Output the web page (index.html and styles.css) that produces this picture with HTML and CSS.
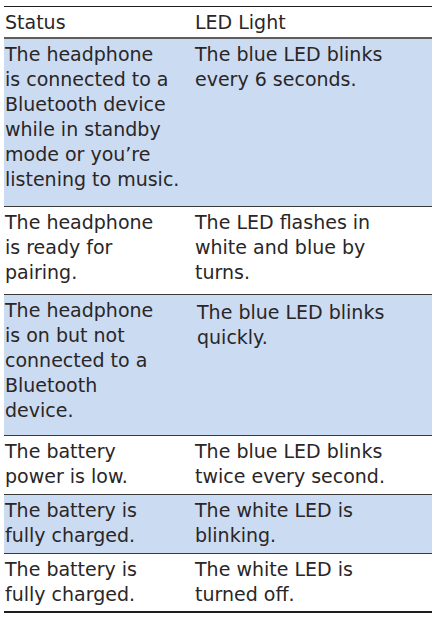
FILE: index.html
```html
<!DOCTYPE html>
<html>
<head>
<meta charset="utf-8">
<link rel="stylesheet" href="styles.css">
</head>
<body>
<div class="table">
  <div class="row head">
    <div class="cell c1">Status</div>
    <div class="cell c2">LED Light</div>
  </div>
  <div class="row blue h1">
    <div class="cell c1">The headphone<br>is connected to a<br>Bluetooth device<br>while in standby<br>mode or you’re<br>listening to music.</div>
    <div class="cell c2">The blue LED blinks<br>every 6 seconds.</div>
  </div>
  <div class="row h2">
    <div class="cell c1">The headphone<br>is ready for<br>pairing.</div>
    <div class="cell c2">The LED flashes in<br>white and blue by<br>turns.</div>
  </div>
  <div class="row blue h3">
    <div class="cell c1">The headphone<br>is on but not<br>connected to a<br>Bluetooth<br>device.</div>
    <div class="cell c2 shift">The blue LED blinks<br>quickly.</div>
  </div>
  <div class="row h4">
    <div class="cell c1">The battery<br>power is low.</div>
    <div class="cell c2">The blue LED blinks<br>twice every second.</div>
  </div>
  <div class="row blue h4">
    <div class="cell c1">The battery is<br>fully charged.</div>
    <div class="cell c2">The white LED is<br>blinking.</div>
  </div>
  <div class="row h4 last">
    <div class="cell c1">The battery is<br>fully charged.</div>
    <div class="cell c2">The white LED is<br>turned off.</div>
  </div>
</div>
</body>
</html>
```
FILE: styles.css
```css
html, body {
  margin: 0;
  padding: 0;
  background: #ffffff;
}
.table {
  margin: 6px 0 0 4px;
  width: 428px;
  border-top: 1.5px solid #1e1e1e;
  font-family: "DejaVu Sans", "Liberation Sans", sans-serif;
  font-size: 19px;
  line-height: 25px;
  color: #2a2627;
}
.row {
  display: grid;
  grid-template-columns: 177px 1fr;
  border-bottom: 1.5px solid #3a3a3a;
  box-sizing: border-box;
}
.row.head {
  height: 32px;
  border-bottom: 2px solid #5e5e5e;
}
.row.blue {
  background: #cbdbf1;
}
.row.h1 { height: 168px; }
.row.h2 { height: 88px; }
.row.h3 { height: 141px; }
.row.h4 { height: 59px; }
.row.last {
  border-bottom: 2px solid #1e1e1e;
}
.cell {
  padding-top: 3px;
  white-space: nowrap;
}
.c1 {
  padding-left: 1px;
}
.c2 {
  padding-left: 14px;
}
.c2.shift {
  padding-left: 16px;
  padding-top: 5px;
}
```
